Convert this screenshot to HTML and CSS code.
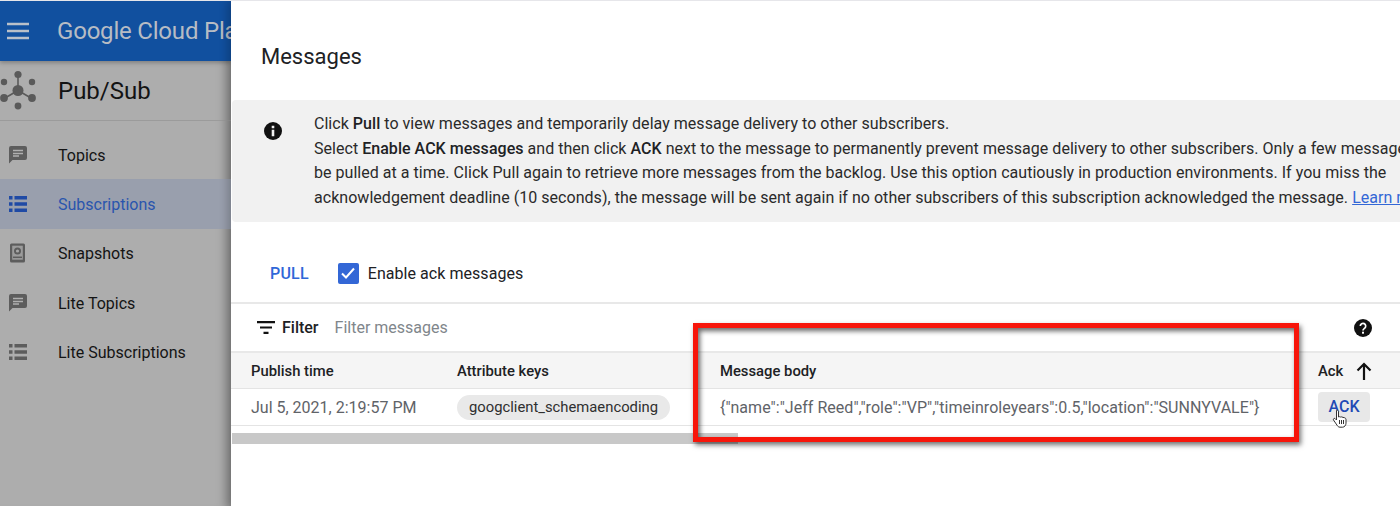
FILE: index.html
```html
<!DOCTYPE html>
<html lang="en">
<head>
<meta charset="utf-8">
<title>Messages</title>
<link rel="stylesheet" href="styles.css">
</head>
<body>
<div class="page">
  <aside class="side">
    <header class="appbar">
      <svg class="burger" width="24" height="20" viewBox="0 0 24 20"><path d="M1 3h22M1 10h22M1 17h22" stroke="#b9c0c9" stroke-width="2.4" fill="none"/></svg>
      <span class="brand">Google Cloud Platform</span>
    </header>
    <div class="product">
      <svg class="hub" width="38" height="42" viewBox="0 0 38 42" fill="#5a5a5a">
        <circle cx="18" cy="20.500" r="5.500"/><circle cx="18" cy="4.500" r="3.600"/><circle cx="18" cy="36" r="3.400"/><circle cx="4" cy="12" r="3.200"/><circle cx="32" cy="12" r="3.200"/><circle cx="4" cy="28" r="3.900"/><circle cx="32" cy="28" r="3.900"/>
        <path d="M18 6v10M18 20.500L5 28M18 20.500l13 7.500" stroke="#5a5a5a" stroke-width="1.600" fill="none"/>
      </svg>
      <span class="product-name">Pub/Sub</span>
    </div>
    <nav class="nav">
      <a class="nav-item">
        <svg class="nav-icon" width="18" height="18" viewBox="0 0 18 18"><path d="M2 0h14a2 2 0 0 1 2 2v10a2 2 0 0 1-2 2H3.500L0 17.500V2a2 2 0 0 1 2-2z" fill="#5d5d5d"/><path d="M4 4.500h10M4 7.500h10M4 10h6" stroke="#b0b0b0" stroke-width="1.300"/></svg>
        <span class="nav-label">Topics</span>
      </a>
      <a class="nav-item is-active">
        <svg class="nav-icon" width="18" height="18" viewBox="0 0 18 18"><path d="M0 1h3.500v3.500H0zM5.500 1H18v3.500H5.500zM0 7.200h3.500v3.500H0zM5.500 7.200H18v3.500H5.500zM0 13.500h3.500V17H0zM5.500 13.500H18V17H5.500z" fill="#1f4aa5"/></svg>
        <span class="nav-label">Subscriptions</span>
      </a>
      <a class="nav-item">
        <svg class="nav-icon" width="18" height="20" viewBox="0 0 18 20"><rect x="1" y="0.500" width="15" height="19" rx="1.500" fill="#5d5d5d"/><rect x="3.200" y="2.700" width="10.600" height="14" fill="#9c9c9c"/><circle cx="8.500" cy="8" r="3.500" fill="#5d5d5d"/><circle cx="8.500" cy="8" r="1.600" fill="#a6a6a6"/><path d="M4 14.300h9" stroke="#5d5d5d" stroke-width="1.500"/></svg>
        <span class="nav-label">Snapshots</span>
      </a>
      <a class="nav-item">
        <svg class="nav-icon" width="18" height="18" viewBox="0 0 18 18"><path d="M2 0h14a2 2 0 0 1 2 2v10a2 2 0 0 1-2 2H3.500L0 17.500V2a2 2 0 0 1 2-2z" fill="#5d5d5d"/><path d="M4 4.500h10M4 7.500h10M4 10h6" stroke="#b0b0b0" stroke-width="1.300"/></svg>
        <span class="nav-label">Lite Topics</span>
      </a>
      <a class="nav-item">
        <svg class="nav-icon" width="18" height="18" viewBox="0 0 18 18"><path d="M0 1h3.500v3.500H0zM5.500 1H18v3.500H5.500zM0 7.200h3.500v3.500H0zM5.500 7.200H18v3.500H5.500zM0 13.500h3.500V17H0zM5.500 13.500H18V17H5.500z" fill="#5d5d5d"/></svg>
        <span class="nav-label">Lite Subscriptions</span>
      </a>
    </nav>
  </aside>
  <main class="panel">
    <h1 class="title">Messages</h1>
    <section class="info">
      <svg class="info-icon" width="18" height="18" viewBox="0 0 18 18"><circle cx="9" cy="9" r="9" fill="#111"/><path d="M7.700 7.800h2.600v6.400H7.700zM7.700 3.800h2.600v2.500H7.700z" fill="#f1f1f1"/></svg>
      <p class="info-text">Click <b>Pull</b> to view messages and temporarily delay message delivery to other subscribers.<br>Select <b>Enable ACK messages</b> and then click <b>ACK</b> next to the message to permanently prevent message delivery to other subscribers. Only a few messages can<br>be pulled at a time. Click Pull again to retrieve more messages from the backlog. Use this option cautiously in production environments. If you miss the<br>acknowledgement deadline (10 seconds), the message will be sent again if no other subscribers of this subscription acknowledged the message. <a class="link">Learn more</a></p>
    </section>
    <div class="actions">
      <span class="pull">PULL</span>
      <span class="check"><svg width="16" height="14" viewBox="0 0 16 14"><path d="M2 7.500l4 4 8-9" stroke="#fff" stroke-width="2" fill="none"/></svg></span>
      <span class="check-label">Enable ack messages</span>
    </div>
    <div class="filter">
      <svg class="filter-icon" width="18" height="13" viewBox="0 0 18 13"><path d="M0 1.200h18M3 6.500h12M6.500 11.800h5" stroke="#111" stroke-width="2.200" fill="none"/></svg>
      <span class="filter-label">Filter</span>
      <span class="filter-input">Filter messages</span>
      <svg class="help" width="18" height="18" viewBox="0 0 18 18"><circle cx="9" cy="9" r="9" fill="#111"/><path d="M6.300 7a2.700 2.700 0 1 1 4.300 2.200C9.600 10 9 10.400 9 11.500" stroke="#fff" stroke-width="1.700" fill="none"/><rect x="8" y="12.700" width="2" height="2" fill="#fff"/></svg>
    </div>
    <div class="row head">
      <span class="cell c-time">Publish time</span>
      <span class="cell c-keys">Attribute keys</span>
      <span class="cell c-body">Message body</span>
      <span class="cell c-ack">Ack
        <svg class="arrow" width="16" height="18" viewBox="0 0 16 18"><path d="M8 18V2M1.500 8.500L8 2l6.500 6.500" stroke="#111" stroke-width="2.200" fill="none"/></svg>
      </span>
    </div>
    <div class="row data">
      <span class="cell c-time">Jul 5, 2021, 2:19:57 PM</span>
      <span class="cell c-keys"><span class="chip">googclient_schemaencoding</span></span>
      <span class="cell c-body">{"name":"Jeff Reed","role":"VP","timeinroleyears":0.5,"location":"SUNNYVALE"}</span>
      <span class="cell c-ack"><span class="ack-btn">ACK</span></span>
    </div>
    <div class="scroll"><div class="thumb"></div></div>
    <div class="callout"></div>
    <svg class="cursor" width="16" height="20" viewBox="0 0 16 20"><path d="M4.500 1.500c1-.6 2 0 2 1V8l1-.3 1 .3 1.200-.1 1.300.5 1.500.3c1 .3 1.500 1 1.500 2v3.500c0 2-1.500 4-3.500 4H8c-1.500 0-2.500-1-3-2L1.500 11c-.5-1 .5-2 1.500-1.500l1.500 1.500z" fill="#fff" stroke="#333" stroke-width="1"/><path d="M7.500 11v4M9.500 11v4M11.500 11v4" stroke="#333" stroke-width="1"/></svg>
  </main>
</div>
</body>
</html>
```
FILE: styles.css
```css
* { box-sizing: border-box; }
html, body { margin: 0; padding: 0; height: 100%; overflow: hidden; background: #fff; }
body { font-family: Roboto, "Liberation Sans", sans-serif; font-size: 16px; color: #202124; }
.page { display: flex; width: 1400px; height: 506px; border-top: 1px solid #e6e6ea; overflow: hidden; }

.side { width: 231px; flex: none; background: #adadad; display: flex; flex-direction: column; box-shadow: inset -14px 0 12px -10px rgba(0,0,0,.22); overflow: hidden; }
.appbar { height: 60px; flex: none; background: #11509f; display: flex; align-items: center; padding-left: 6px; box-shadow: 0 2px 4px rgba(0,0,0,.25); white-space: nowrap; }
.burger { flex: none; }
.brand { margin-left: 27px; font-size: 24px; color: #b7bcc4; letter-spacing: -.2px; }
.product { height: 60px; flex: none; display: flex; align-items: center; border-bottom: 1px solid #9b9b9b; }
.hub { flex: none; }
.product-name { margin-left: 20px; font-size: 24px; color: #131313; }
.nav { display: flex; flex-direction: column; padding-top: 9px; }
.nav-item { height: 49.300px; display: flex; align-items: center; padding-left: 9px; color: #141414; font-size: 16px; }
.nav-label { padding-top: 1.500px; }
.nav-icon { flex: none; margin-right: 31px; }
.is-active { background: #999fad; color: #2a55ad; }

.panel { position: relative; flex: 1; min-width: 0; box-shadow: -4px 0 8px rgba(0,0,0,.2); }
.title { margin: 0; height: 99px; padding: 41px 0 0 30px; font-size: 22px; font-weight: 400; line-height: 30px; color: #202124; }
.info { height: 122px; margin-left: 1px; background: #f1f1f1; border-radius: 4px 0 0 4px; display: flex; padding: 12px 0 0 32px; overflow: hidden; }
.info-icon { flex: none; margin: 10px 32px 0 0; }
.info-text { margin: 0; width: 1180px; flex: none; line-height: 24.600px; font-size: 16px; letter-spacing: .034px; white-space: nowrap; color: #2a2a2a; }
.info-text b { font-weight: 500; color: #202124; }
.link { color: #3367d6; text-decoration: underline; }
.actions { height: 82px; display: flex; align-items: center; padding: 22px 0 0 39px; border-bottom: 2px solid #e8e8e8; }
.pull { color: #2f67d8; font-weight: 500; font-size: 16px; letter-spacing: .2px; }
.check { width: 21px; height: 21px; margin-left: 29px; border-radius: 2px; background: #3367d6; display: flex; align-items: center; justify-content: center; }
.check-label { margin-left: 9px; letter-spacing: .05px; }
.filter { height: 49px; display: flex; align-items: center; padding-left: 26px; border-bottom: 2px solid #e8e8e8; }
.filter-label { margin-left: 7px; font-weight: 500; }
.filter-input { margin-left: 16px; color: #80868b; }
.help { margin-left: auto; margin-right: 28px; }
.row { display: flex; align-items: center; border-bottom: 1px solid #e4e4e4; }
.head { height: 36px; background: #f5f5f5; font-size: 14.800px; font-weight: 500; color: #202124; }
.data { height: 37px; color: #5f6368; font-size: 16px; }
.cell { flex: none; white-space: nowrap; }
.c-time { width: 206px; padding-left: 20px; }
.c-keys { width: 263px; padding-left: 20px; }
.c-body { width: 598px; padding-left: 20px; letter-spacing: .04px; }
.head .c-body { letter-spacing: 0; }
.c-ack { display: flex; align-items: center; padding-left: 20px; }
.arrow { margin-left: 13px; }
.chip { display: inline-block; height: 25px; line-height: 25px; padding: 0 12px; border-radius: 13px; background: #e9e9e9; color: #2f2f2f; font-size: 14.800px; }
.ack-btn { display: block; width: 52px; height: 30px; line-height: 30px; text-align: center; border-radius: 4px; background: #e8e8e8; color: #1f49b5; font-weight: 500; }
.scroll { height: 11px; margin: 7px 0 0 1px; }
.thumb { width: 506px; height: 100%; background: #c8c8c8; }
.callout { position: absolute; left: 462px; top: 322px; width: 606px; height: 119px; border: 5.500px solid #f7150a; box-shadow: 2px 3px 5px rgba(0,0,0,.55), inset 2px 3px 5px rgba(0,0,0,.6); }
.cursor { position: absolute; left: 1101px; top: 408px; }
```
